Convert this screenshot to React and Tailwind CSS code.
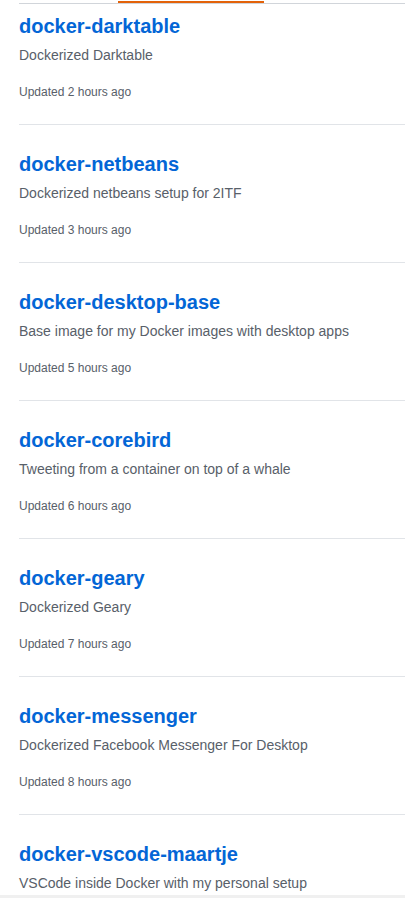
import React from "react";

const repos = [
  { name: "docker-darktable", desc: "Dockerized Darktable", updated: "Updated 2 hours ago" },
  { name: "docker-netbeans", desc: "Dockerized netbeans setup for 2ITF", updated: "Updated 3 hours ago" },
  { name: "docker-desktop-base", desc: "Base image for my Docker images with desktop apps", updated: "Updated 5 hours ago" },
  { name: "docker-corebird", desc: "Tweeting from a container on top of a whale", updated: "Updated 6 hours ago" },
  { name: "docker-geary", desc: "Dockerized Geary", updated: "Updated 7 hours ago" },
  { name: "docker-messenger", desc: "Dockerized Facebook Messenger For Desktop", updated: "Updated 8 hours ago" },
  { name: "docker-vscode-maartje", desc: "VSCode inside Docker with my personal setup" },
];

export default function App() {
  return (
    <div className="w-[405px] h-[898px] overflow-hidden bg-white flex flex-col font-['Liberation_Sans',Arial,sans-serif]">
      <div className="h-[895px] overflow-hidden">
        {/* Tab underline (tabs scrolled off above) */}
        <div className="pt-[1px]">
          <div className="flex">
            <div className="w-[118px]" />
            <div className="w-[146px] h-[2px] bg-[#e36209]" />
          </div>
          <div className="ml-[19px] h-px bg-[#d1d5da]" />
        </div>

        <ul className="pl-[19px]">
          {repos.map((repo, i) => (
            <li
              key={repo.name}
              className={`border-b border-[#e1e4e8] pb-[23px] ${i === 0 ? "pt-[7px]" : "pt-[24px]"}`}
            >
              <h3 className="text-[20px] leading-[30px] font-bold text-[#0366d6]">
                <a href="#">{repo.name}</a>
              </h3>
              <p className="mt-[4px] text-[14px] leading-[21px] text-[#586069]">{repo.desc}</p>
              {repo.updated && (
                <p className="mt-[17px] text-[12px] leading-[18px] text-[#586069]">{repo.updated}</p>
              )}
            </li>
          ))}
        </ul>
      </div>
      <div className="h-[3px] bg-[#f0f0f0]" />
    </div>
  );
}
